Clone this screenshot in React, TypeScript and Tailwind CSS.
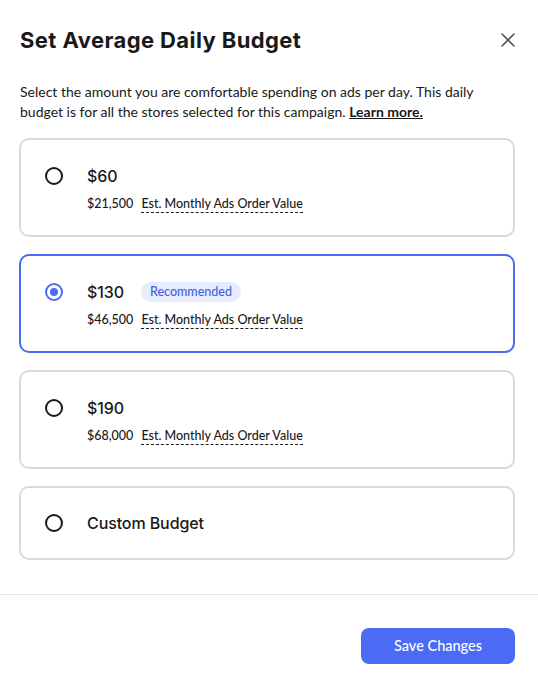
import React, {useState} from "react";

type Option = {
    id: string;
    amount: string;
    monthly?: string;
    recommended?: boolean;
};

const OPTIONS: Option[] = [
    {id: "60", amount: "$60", monthly: "$21,500"},
    {id: "130", amount: "$130", monthly: "$46,500", recommended: true},
    {id: "190", amount: "$190", monthly: "$68,000"},
    {id: "custom", amount: "Custom Budget"},
];

const CloseIcon = () => (
    <svg width="14" height="14" viewBox="0 0 14 14" fill="none" stroke="#555" strokeWidth="1.6" strokeLinecap="round">
        <path d="M1 1l12 12"/>
        <path d="M13 1L1 13"/>
    </svg>
);

const Radio = ({checked}: { checked: boolean }) => (
    <div
        className={`w-[18px] h-[18px] shrink-0 rounded-full border-2 flex items-center justify-center ${checked ? "border-[#4b6bf5]" : "border-[#191919]"}`}>
        {checked && <div className="w-[8px] h-[8px] rounded-full bg-[#4b6bf5]"/>}
    </div>
);

function BudgetCard({option, checked, onSelect}: { option: Option; checked: boolean; onSelect: () => void }) {
    return (
        <div onClick={onSelect}
             className={`cursor-pointer rounded-[10px] border-2 pl-[24px] ${option.monthly ? "pt-[24px] pb-[21px]" : "py-[23px]"} ${checked ? "border-[#4b6bf5]" : "border-[#dadada]"}`}>
            <div className="flex items-center h-[24px]">
                <Radio checked={checked}/>
                <span className="ml-[24px] font-['Inter',sans-serif] text-[16px] font-medium tracking-[-0.1px] text-[#191919]">
                    {option.amount}
                </span>
                {option.recommended && (
                    <span
                        className="ml-[17px] h-[20px] px-[9px] rounded-full bg-[#e6ebfe] text-[#3f5fe6] text-[12.5px] font-medium flex items-center">
                        Recommended
                    </span>
                )}
            </div>
            {option.monthly && (
                <div className="flex items-start h-[18px] mt-[8px] pl-[42px] text-[12.5px] font-medium text-[#191919]">
                    <span className="leading-[16px]">{option.monthly}</span>
                    <span className="ml-[8px] leading-[16px] border-b border-dashed border-[#191919]">
                        Est. Monthly Ads Order Value
                    </span>
                </div>
            )}
        </div>
    );
}

export default function App() {
    const [selected, setSelected] = useState("130");

    return (
        <div className="w-[538px] h-[686px] bg-white text-[#191919] font-['Lato',sans-serif]">
            <div className="pl-[19px] pr-[23px] pt-[26px]">
                <div className="flex items-center justify-between h-[28px]">
                    <h1 className="pl-[1px] font-['Inter',sans-serif] text-[22px] leading-[28px] font-bold tracking-[0.4px]">
                        Set Average Daily Budget
                    </h1>
                    <button className="w-[20px] h-[20px] -mr-[3px] flex items-center justify-center">
                        <CloseIcon/>
                    </button>
                </div>
                <p className="mt-[28px] pl-[1px] text-[14px] leading-[20px] text-[#191919]">
                    Select the amount you are comfortable spending on ads per day. This daily budget is for all the
                    stores selected for this campaign. <a href="#" className="font-bold underline">Learn more.</a>
                </p>
                <div className="mt-[16px] flex flex-col gap-[17px]">
                    {OPTIONS.map(o => (
                        <BudgetCard key={o.id} option={o} checked={selected === o.id}
                                    onSelect={() => setSelected(o.id)}/>
                    ))}
                </div>
            </div>
            <div className="mt-[34px] border-t border-[#e6e6e6]"/>
            <div className="flex justify-end pr-[23px] pt-[33px]">
                <button
                    className="w-[154px] h-[36px] rounded-[8px] bg-[#4b6bf5] text-white text-[14.5px] font-medium">
                    Save Changes
                </button>
            </div>
        </div>
    );
}
